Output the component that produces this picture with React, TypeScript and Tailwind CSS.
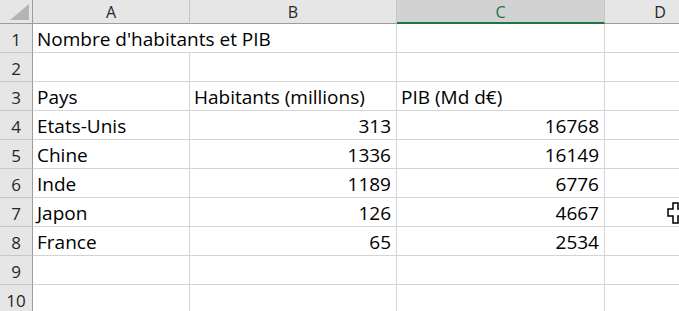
import React from "react";

type Row = { a?: string; b?: string; c?: string; bRight?: boolean; cRight?: boolean };

const ROWS: Row[] = [
  { a: "Nombre d'habitants et PIB" },
  {},
  { a: "Pays", b: "Habitants (millions)", c: "PIB (Md d€)" },
  { a: "Etats-Unis", b: "313", c: "16768", bRight: true, cRight: true },
  { a: "Chine", b: "1336", c: "16149", bRight: true, cRight: true },
  { a: "Inde", b: "1189", c: "6776", bRight: true, cRight: true },
  { a: "Japon", b: "126", c: "4667", bRight: true, cRight: true },
  { a: "France", b: "65", c: "2534", bRight: true, cRight: true },
  {},
  {},
];

const font = { fontFamily: "'Open Sans', 'Noto Sans', sans-serif" };

const colHead = "flex items-center justify-center text-[16px] leading-[20px] text-[#262626]";

export default function App() {
  return (
    <div
      className="relative h-[311px] w-[679px] overflow-hidden bg-white text-[19px] leading-none text-black"
      style={font}
    >
      <div className="grid w-[715px] grid-cols-[33px_157px_207px_208px_110px] grid-rows-[24px_repeat(10,29px)]">
        {/* corner */}
        <div className="relative border-b border-r border-[#9c9c9c] bg-[#e6e6e6]">
          <svg className="absolute inset-0" width="33" height="24" viewBox="0 0 33 24">
            <polygon points="10,20 29,20 29,4" fill="#b4b4b4" />
          </svg>
        </div>
        <div className={`${colHead} border-b border-r border-b-[#9c9c9c] border-r-[#c6c6c6] bg-[#e6e6e6]`}>
          A
        </div>
        <div className={`${colHead} border-b border-r border-b-[#9c9c9c] border-r-[#c6c6c6] bg-[#e6e6e6]`}>
          B
        </div>
        <div className="flex items-center justify-center border-b-2 border-r border-b-[#217346] border-r-[#c6c6c6] bg-[#d2d2d2] pt-[1px] text-[16px] leading-[20px] text-[#217346]">
          C
        </div>
        <div className={`${colHead} border-b border-b-[#9c9c9c] bg-[#e6e6e6]`}>D</div>

        {ROWS.map((row, i) => (
          <React.Fragment key={i}>
            <div className="flex items-center justify-center border-b border-r border-b-[#c6c6c6] border-r-[#9c9c9c] bg-[#e6e6e6] pt-[2px] text-[17px] text-[#262626]">
              {i + 1}
            </div>
            <div
              className={`flex items-center whitespace-nowrap border-b border-[#d4d4d4] pl-[4px] pt-[2px] ${
                i === 0 ? "overflow-visible" : "border-r"
              }`}
            >
              {row.a}
            </div>
            <div
              className={`flex items-center whitespace-nowrap border-b border-r border-[#d4d4d4] pt-[2px] ${
                row.bRight ? "justify-end pr-[5px]" : "pl-[4px]"
              }`}
            >
              {row.b}
            </div>
            <div
              className={`flex items-center whitespace-nowrap border-b border-r border-[#d4d4d4] pt-[2px] ${
                row.cRight ? "justify-end pr-[5px]" : "pl-[4px]"
              }`}
            >
              {row.c}
            </div>
            <div className="border-b border-[#d4d4d4]" />
          </React.Fragment>
        ))}
      </div>

      {/* mouse cursor */}
      <svg
        className="absolute left-[667px] top-[202px]"
        width="16"
        height="22"
        viewBox="0 0 16 22"
      >
        <path
          d="M6 1 H11 V7 H15 V14 H11 V21 H6 V14 H1 V7 H6 Z"
          fill="#fff"
          stroke="#000"
          strokeWidth="1.5"
        />
      </svg>
    </div>
  );
}
